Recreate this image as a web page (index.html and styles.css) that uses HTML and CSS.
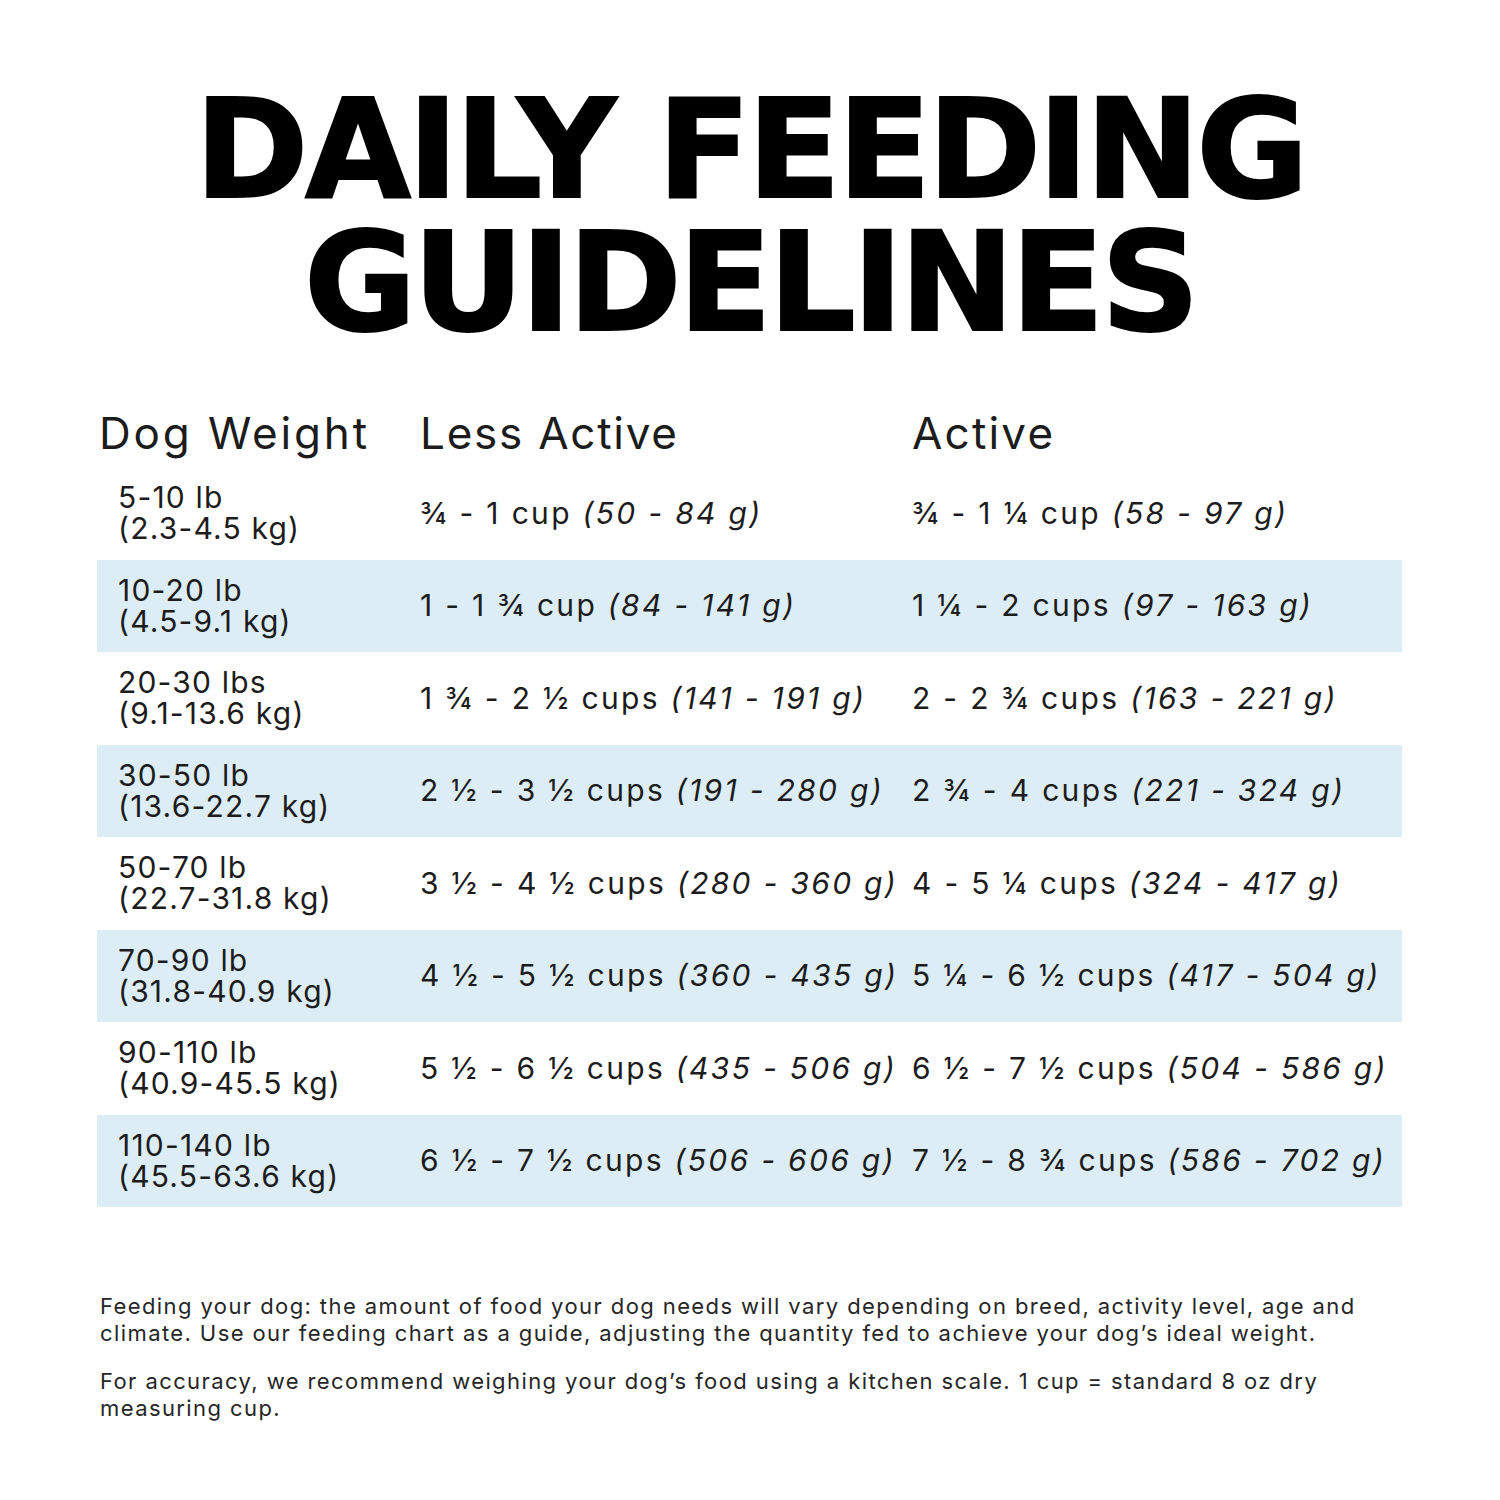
FILE: index.html
```html
<!DOCTYPE html>
<html lang="en">
<head>
<meta charset="utf-8">
<title>Daily Feeding Guidelines</title>
<link rel="stylesheet" href="styles.css">
</head>
<body>
<main class="page">
  <h1 class="title">DAILY FEEDING<br>GUIDELINES</h1>
  <div class="chart">
    <div class="row head">
      <div class="c1">Dog Weight</div>
      <div class="c2">Less Active</div>
      <div class="c3">Active</div>
    </div>
    <div class="row">
      <div class="c1">5-10 lb<br>(2.3-4.5 kg)</div>
      <div class="c2">¾ - 1 cup <em>(50 - 84 g)</em></div>
      <div class="c3">¾ - 1 ¼ cup <em>(58 - 97 g)</em></div>
    </div>
    <div class="row alt">
      <div class="c1">10-20 lb<br>(4.5-9.1 kg)</div>
      <div class="c2">1 - 1 ¾ cup <em>(84 - 141 g)</em></div>
      <div class="c3">1 ¼ - 2 cups <em>(97 - 163 g)</em></div>
    </div>
    <div class="row">
      <div class="c1">20-30 lbs<br>(9.1-13.6 kg)</div>
      <div class="c2">1 ¾ - 2 ½ cups <em>(141 - 191 g)</em></div>
      <div class="c3">2 - 2 ¾ cups <em>(163 - 221 g)</em></div>
    </div>
    <div class="row alt">
      <div class="c1">30-50 lb<br>(13.6-22.7 kg)</div>
      <div class="c2">2 ½ - 3 ½ cups <em>(191 - 280 g)</em></div>
      <div class="c3">2 ¾ - 4 cups <em>(221 - 324 g)</em></div>
    </div>
    <div class="row">
      <div class="c1">50-70 lb<br>(22.7-31.8 kg)</div>
      <div class="c2">3 ½ - 4 ½ cups <em>(280 - 360 g)</em></div>
      <div class="c3">4 - 5 ¼ cups <em>(324 - 417 g)</em></div>
    </div>
    <div class="row alt">
      <div class="c1">70-90 lb<br>(31.8-40.9 kg)</div>
      <div class="c2">4 ½ - 5 ½ cups <em>(360 - 435 g)</em></div>
      <div class="c3">5 ¼ - 6 ½ cups <em>(417 - 504 g)</em></div>
    </div>
    <div class="row">
      <div class="c1">90-110 lb<br>(40.9-45.5 kg)</div>
      <div class="c2">5 ½ - 6 ½ cups <em>(435 - 506 g)</em></div>
      <div class="c3">6 ½ - 7 ½ cups <em>(504 - 586 g)</em></div>
    </div>
    <div class="row alt">
      <div class="c1">110-140 lb<br>(45.5-63.6 kg)</div>
      <div class="c2">6 ½ - 7 ½ cups <em>(506 - 606 g)</em></div>
      <div class="c3">7 ½ - 8 ¾ cups <em>(586 - 702 g)</em></div>
    </div>
  </div>
  <div class="notes">
    <p>Feeding your dog: the amount of food your dog needs will vary depending on breed, activity level, age and<br>climate. Use our feeding chart as a guide, adjusting the quantity fed to achieve your dog’s ideal weight.</p>
    <p>For accuracy, we recommend weighing your dog’s food using a kitchen scale. 1 cup = standard 8 oz dry<br>measuring cup.</p>
  </div>
</main>
</body>
</html>
```
FILE: styles.css
```css
html, body {
  margin: 0;
  padding: 0;
  background: #ffffff;
}

body {
  width: 1500px;
  height: 1500px;
  overflow: hidden;
  font-family: Inter, "Open Sans", sans-serif;
  color: #1c1c1c;
}

.page {
  padding-top: 83px;
}

.title {
  margin: 0;
  text-align: center;
  font-family: "DejaVu Sans", sans-serif;
  font-weight: bold;
  font-size: 137px;
  line-height: 133px;
  letter-spacing: -3.5px;
  color: #000;
  -webkit-text-stroke: 2px #000;
}

.chart {
  margin: 58px 0 0 97px;
  width: 1305px;
}

.row {
  display: grid;
  grid-template-columns: 323px 492px 1fr;
  align-items: center;
  height: 92.5px;
  font-size: 30px;
  line-height: 31px;
  letter-spacing: 0.04em;
  font-weight: 400;
}

.row .c1 {
  padding-left: 21px;
}

.row .c2,
.row .c3 {
  letter-spacing: 0.077em;
  white-space: nowrap;
}

.row em {
  font-style: italic;
}

.row.alt {
  background: #dcedf5;
}

.row.head {
  height: 60px;
  align-items: start;
  padding-top: 4px;
  box-sizing: border-box;
  font-size: 44px;
  line-height: 44px;
  letter-spacing: 0.05em;
}

.row.head .c1 {
  padding-left: 2px;
  letter-spacing: 0.065em;
}

.row.head .c2,
.row.head .c3 {
  padding-left: 0;
  letter-spacing: 0.05em;
}

.row.head .c2 {
  letter-spacing: 0.04em;
}

.notes {
  margin: 86px 0 0 100px;
  font-size: 22px;
  line-height: 27px;
  letter-spacing: 0.064em;
  color: #262626;
}

.notes p {
  margin: 0 0 21px;
}
```
